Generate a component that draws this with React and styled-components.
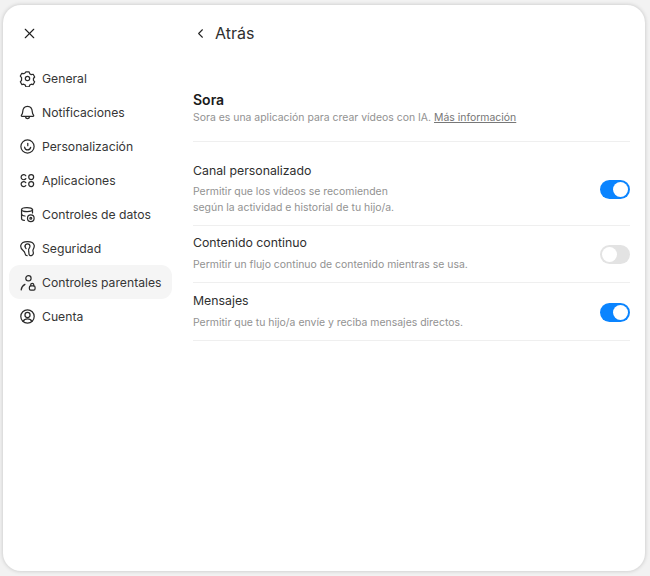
import React from 'react';
import styled, { createGlobalStyle } from 'styled-components';
import { X, ChevronLeft } from 'lucide-react';

const GlobalStyle = createGlobalStyle`
  html, body {
    margin: 0;
    padding: 0;
    height: 576px;
    overflow: hidden;
    background: #f2f2f2;
    font-family: 'Inter', 'Liberation Sans', sans-serif;
  }
`;

const Icon = ({ children }) => (
  <NavSvg viewBox="0 0 18 18" fill="none" stroke="#2a2a2a" strokeWidth="1.3" strokeLinecap="round" strokeLinejoin="round">
    {children}
  </NavSvg>
);

const navItems = [
  {
    label: 'General',
    icon: (
      <>
        <path d="M7.3 2h3.400l.6 1.900 1.700 1 2-.4 1.600 2.900-1.300 1.600v1.900l1.300 1.600-1.600 2.900-2-.4-1.700 1-.6 1.900H7.300l-.6-1.900-1.700-1-2 .4-1.600-2.900 1.300-1.600V8L1.400 6.400 3 3.500l2 .4 1.700-1z" />
        <circle cx="9" cy="9" r="2.300" />
      </>
    ),
  },
  {
    label: 'Notificaciones',
    icon: (
      <>
        <path d="M3.200 13.200c-.7 0-1-.8-.6-1.300.8-1 1.200-2 1.300-3.600C4.100 5 6 2.400 9 2.400s4.900 2.600 5.100 5.900c.1 1.600.5 2.600 1.300 3.600.4.500.1 1.300-.6 1.300z" />
        <path d="M6.800 13.400c.2 1.300 1 2.100 2.200 2.100s2-.8 2.200-2.100" />
      </>
    ),
  },
  {
    label: 'Personalización',
    icon: (
      <>
        <circle cx="9" cy="9" r="7" />
        <path d="M9.300 5.800v2.400" />
        <path d="M5.900 9.600c.3 1.900 1.600 3 3.300 3 1.600 0 2.800-1 3.200-2.800" />
      </>
    ),
  },
  {
    label: 'Aplicaciones',
    icon: (
      <>
        <path d="M7.200 4a2.700 2.700 0 1 0 0 3" />
        <circle cx="12.900" cy="5.400" r="2.600" />
        <path d="M7.200 11.300a2.700 2.700 0 1 0 0 3" />
        <circle cx="12.900" cy="12.800" r="2.600" />
      </>
    ),
  },
  {
    label: 'Controles de datos',
    icon: (
      <>
        <ellipse cx="8.500" cy="3.800" rx="5.800" ry="2.200" />
        <path d="M2.700 3.800v9.400c0 1.200 1.300 1.900 3 2.100" />
        <path d="M14.300 3.800v3.600" />
        <path d="M2.700 8.500c0 1.200 1.700 2 3.700 2.100" />
        <circle cx="12.500" cy="13" r="3.500" />
        <circle cx="12.500" cy="13" r="1" />
      </>
    ),
  },
  {
    label: 'Seguridad',
    icon: (
      <>
        <path d="M8.600 16.600c-1.300 0-2-1-2.200-2.300-.2-1.500-.9-2.300-2.300-3.500C2.300 9.300 1.500 7.600 1.900 5.600 2.500 3 5.300 1.600 9 1.600s6.500 1.400 7.100 4c.4 1.800-.4 3.300-1.200 4.700-.6 1.100.5 2.300.3 3.800-.3 2-2.500 3-4 2-1.200-.8-.4-2.700-1-4.400" />
        <path d="M6.400 6.600a2.600 2.600 0 1 1 5.200 0c0 1-.4 1.700-1 2.400-.5.7-.6 1.300-.4 2" />
        <path d="M6.400 6.600c0 1 .5 1.800 1.100 2.500" />
      </>
    ),
  },
  {
    label: 'Controles parentales',
    icon: (
      <>
        <circle cx="10" cy="4.500" r="2.800" />
        <path d="M2.300 16.800c.3-2.600 1.700-4.600 4-5.800" />
        <rect x="11" y="12.500" width="6" height="4.600" rx="1.400" />
        <path d="M12.400 12.500v-1a1.600 1.600 0 0 1 3.200 0v1" />
      </>
    ),
  },
  {
    label: 'Cuenta',
    icon: (
      <>
        <circle cx="9" cy="9" r="7.100" />
        <circle cx="9" cy="7.400" r="2.700" />
        <path d="M4.400 14.200c.8-1.800 2.500-2.600 4.600-2.600s3.800.8 4.600 2.600" />
      </>
    ),
  },
];

const settings = [
  {
    title: 'Canal personalizado',
    lines: ['Permitir que los vídeos se recomienden', 'según la actividad e historial de tu hijo/a.'],
    on: true,
    top: 7,
    bottom: 9,
    gap: 3,
  },
  {
    title: 'Contenido continuo',
    lines: ['Permitir un flujo continuo de contenido mientras se usa.'],
    on: false,
    top: 7,
    bottom: 9,
    gap: 4,
  },
  {
    title: 'Mensajes',
    lines: ['Permitir que tu hijo/a envíe y reciba mensajes directos.'],
    on: true,
    top: 8,
    bottom: 9,
    gap: 4,
  },
];

const App = () => {
  return (
    <Page>
      <GlobalStyle />
      <Panel>
        <Sidebar>
          <CloseButton>
            <X size={17} strokeWidth={1.6} color="#1f1f1f" />
          </CloseButton>
          <Nav>
            {navItems.map((item) => (
              <NavItem key={item.label} $active={item.label === 'Controles parentales'}>
                <Icon>{item.icon}</Icon>
                <span>{item.label}</span>
              </NavItem>
            ))}
          </Nav>
        </Sidebar>
        <Main>
          <BackRow>
            <ChevronLeft size={15} strokeWidth={1.7} color="#222" />
            <BackLabel>Atrás</BackLabel>
          </BackRow>
          <Intro>
            <AppName>Sora</AppName>
            <Description>
              Sora es una aplicación para crear vídeos con IA. <MoreLink>Más información</MoreLink>
            </Description>
          </Intro>
          {settings.map((row) => (
            <SettingRow key={row.title} $top={row.top} $bottom={row.bottom}>
              <div>
                <SettingTitle $gap={row.gap}>{row.title}</SettingTitle>
                {row.lines.map((line) => (
                  <Description key={line}>{line}</Description>
                ))}
              </div>
              <Toggle $on={row.on}>
                <Knob />
              </Toggle>
            </SettingRow>
          ))}
        </Main>
      </Panel>
    </Page>
  );
};

const Page = styled.div`
  width: 650px;
  height: 576px;
  padding: 5px 5px 5px 3px;
  box-sizing: border-box;
`;

const Panel = styled.div`
  height: 100%;
  display: flex;
  background: #fff;
  border-radius: 18px;
  box-shadow: 0 0 4px rgba(0, 0, 0, 0.2);
`;

const Sidebar = styled.div`
  width: 169px;
  padding: 15px 0 0 6px;
  box-sizing: border-box;
  flex-shrink: 0;
`;

const CloseButton = styled.div`
  height: 26px;
  padding-left: 12px;
  display: flex;
  align-items: center;
`;

const Nav = styled.div`
  margin-top: 15px;
  display: flex;
  flex-direction: column;
`;

const NavItem = styled.div`
  height: 34px;
  padding-left: 10px;
  display: flex;
  align-items: center;
  gap: 6px;
  border-radius: 11px;
  font-size: 12.200px;
  color: #363636;
  white-space: nowrap;
  background: ${(props) => (props.$active ? '#f5f5f5' : 'transparent')};
`;

const NavSvg = styled.svg`
  width: 17px;
  height: 17px;
  flex-shrink: 0;
`;

const Main = styled.div`
  flex: 1;
  padding: 15px 15px 0 21px;
`;

const BackRow = styled.div`
  height: 26px;
  display: flex;
  align-items: center;
  gap: 7px;
`;

const BackLabel = styled.span`
  font-size: 16px;
  color: #2f2f2f;
`;

const Intro = styled.div`
  margin-top: 44px;
  margin-bottom: 12px;
  padding-bottom: 15px;
  border-bottom: 1px solid #efefef;
`;

const AppName = styled.div`
  font-size: 14px;
  line-height: 20px;
  font-weight: 600;
  color: #1a1a1a;
`;

const Description = styled.div`
  font-size: 10.450px;
  line-height: 16px;
  color: #929292;
  white-space: nowrap;
`;

const MoreLink = styled.span`
  color: #777;
  text-decoration: underline;
`;

const SettingRow = styled.div`
  padding: ${(props) => props.$top}px 0 ${(props) => props.$bottom}px;
  display: flex;
  align-items: center;
  justify-content: space-between;
  border-bottom: 1px solid #efefef;
`;

const SettingTitle = styled.div`
  font-size: 12.300px;
  line-height: 20px;
  color: #2f2f2f;
  margin-bottom: ${(props) => props.$gap}px;
`;

const Toggle = styled.div`
  width: 30px;
  height: 19px;
  margin-top: 2px;
  padding: 2px;
  box-sizing: border-box;
  border-radius: 10px;
  display: flex;
  justify-content: ${(props) => (props.$on ? 'flex-end' : 'flex-start')};
  background: ${(props) => (props.$on ? '#0a84ff' : '#e3e3e3')};
`;

const Knob = styled.div`
  width: 15px;
  height: 15px;
  border-radius: 50%;
  background: #fff;
`;

export default App;
